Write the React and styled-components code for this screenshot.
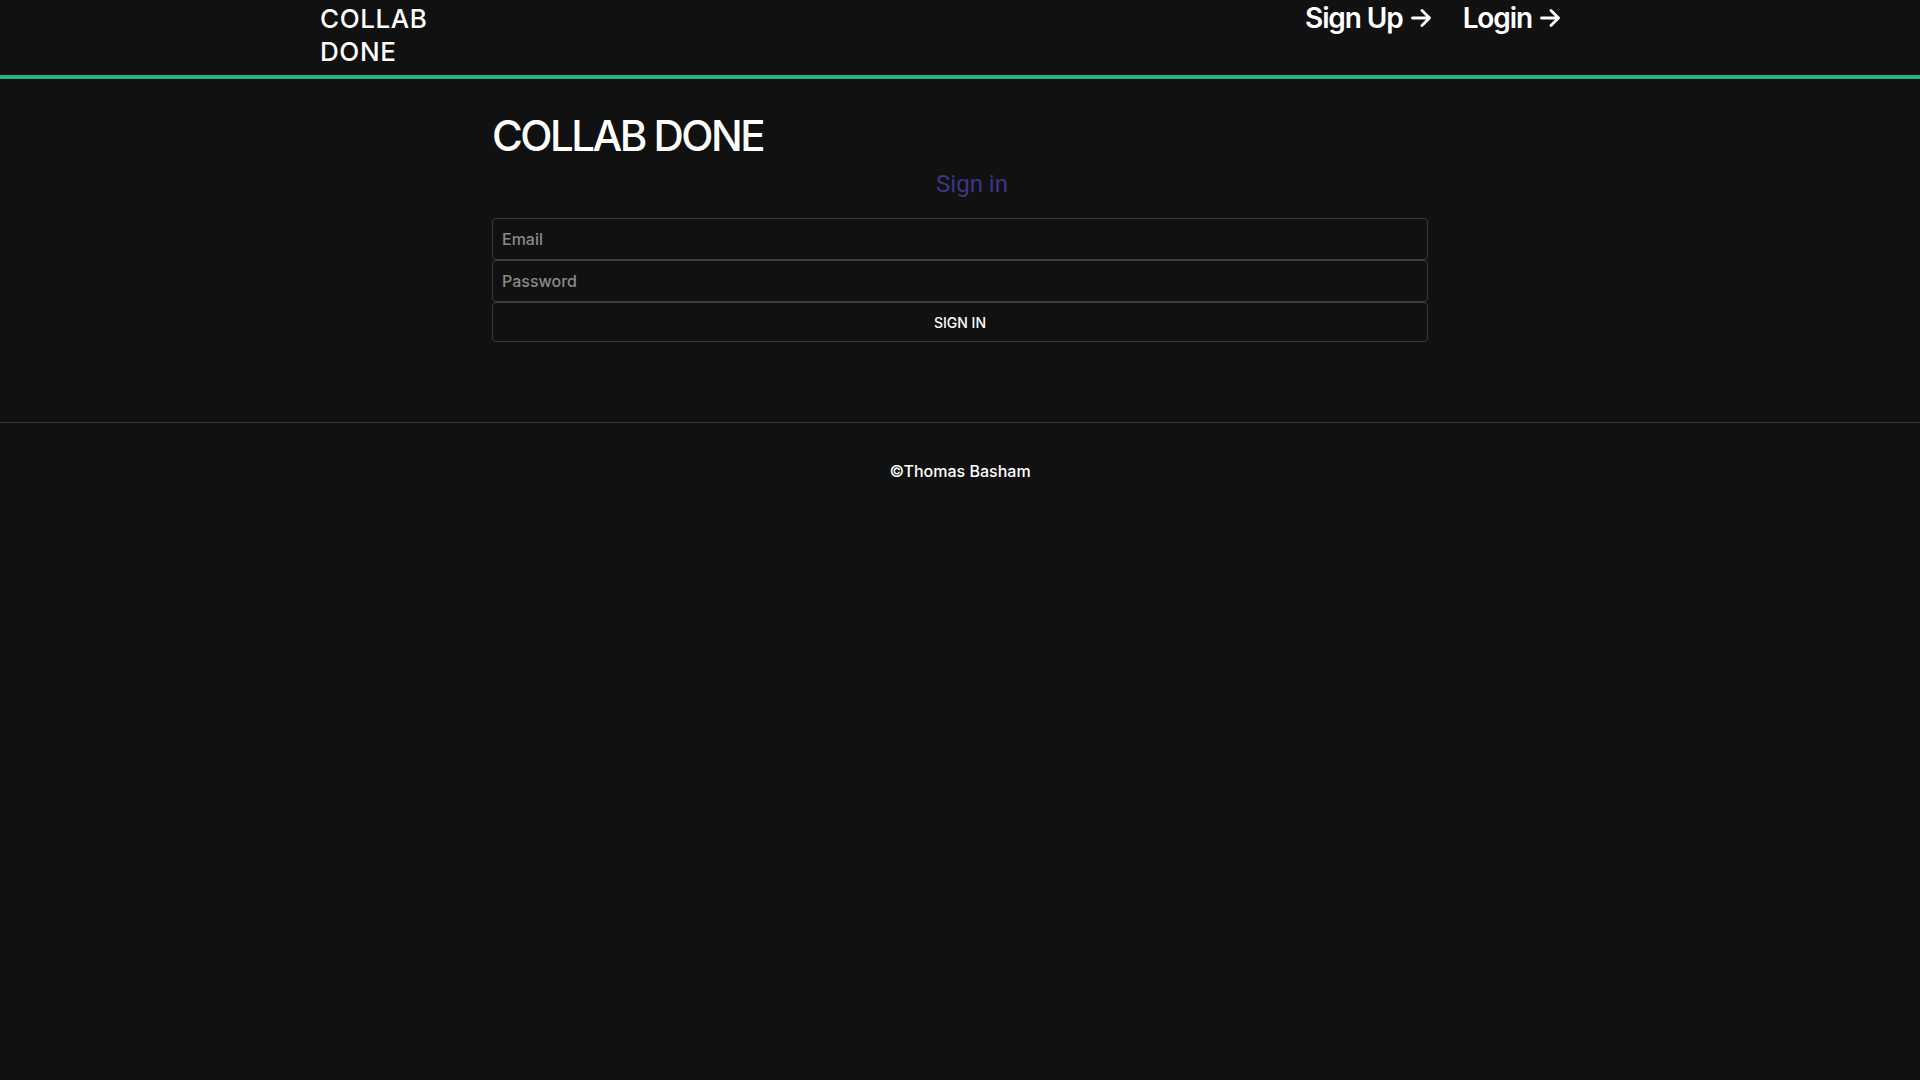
import React from 'react';
import styled, { createGlobalStyle } from 'styled-components';

const GlobalStyle = createGlobalStyle`
  html, body {
    margin: 0;
    padding: 0;
    background: #111111;
    min-height: 100%;
  }
  body {
    font-family: Inter, 'Noto Sans', sans-serif;
    color: #ffffff;
    min-height: 1080px;
  }
  * {
    box-sizing: border-box;
  }
`;

const Header = styled.header`
  height: 79px;
  border-bottom: 4px solid #25b47e;
`;

const HeaderInner = styled.div`
  width: 1280px;
  margin: 0 auto;
  display: flex;
  justify-content: space-between;
  align-items: flex-start;
`;

const Logo = styled.a`
  width: 120px;
  padding-top: 2px;
  font-size: 26px;
  line-height: 33px;
  font-weight: 500;
  letter-spacing: 0.6px;
  color: #ffffff;
  text-decoration: none;
`;

const Nav = styled.nav`
  display: flex;
  gap: 31px;
  padding-right: 39px;
  padding-top: 1px;
`;

const NavLink = styled.a`
  display: flex;
  align-items: center;
  gap: 8px;
  font-size: 28px;
  font-weight: 600;
  letter-spacing: -1.1px;
  color: #ffffff;
  text-decoration: none;
  cursor: pointer;
`;

const Main = styled.main`
  width: 936px;
  margin: 30px auto 0;
  padding-bottom: 80px;
`;

const Title = styled.h1`
  margin: 0;
  font-size: 42px;
  line-height: 53px;
  font-weight: 500;
  letter-spacing: -2.5px;
  color: #ffffff;
`;

const Subtitle = styled.h2`
  margin: 8px 0 20px;
  padding-left: 24px;
  text-align: center;
  font-family: Roboto, sans-serif;
  font-size: 24px;
  font-weight: 400;
  color: #3d3687;
`;

const Form = styled.form`
  display: flex;
  flex-direction: column;
`;

const Input = styled.input`
  height: 42px;
  padding: 0 9px;
  background: #111111;
  border: 1px solid #3a3a3a;
  border-radius: 4px;
  font-family: Inter, sans-serif;
  font-size: 16px;
  font-weight: 500;
  color: #ffffff;
  outline: none;

  &::placeholder {
    color: #8a8a8a;
  }
`;

const SubmitButton = styled.button`
  height: 40px;
  background: #111111;
  border: 1px solid #3a3a3a;
  border-radius: 4px;
  font-family: Inter, sans-serif;
  font-size: 14px;
  font-weight: 500;
  text-transform: uppercase;
  color: #ffffff;
  cursor: pointer;
`;

const Footer = styled.footer`
  border-top: 1px solid #3a3a3a;
  padding-top: 38px;
  text-align: center;
  font-size: 16px;
  font-weight: 500;
  color: #ffffff;
`;

const Arrow = () => (
  <svg width="21" height="18" viewBox="0 0 21 18" fill="none">
    <path
      d="M1.5 9H18.5M11 1.5L18.5 9L11 16.5"
      stroke="#ffffff"
      strokeWidth="2.8"
      strokeLinecap="round"
      strokeLinejoin="round"
    />
  </svg>
);

const App = () => (
  <>
    <GlobalStyle />
    <Header>
      <HeaderInner>
        <Logo href="#">COLLAB DONE</Logo>
        <Nav>
          <NavLink>
            Sign Up <Arrow />
          </NavLink>
          <NavLink>
            Login <Arrow />
          </NavLink>
        </Nav>
      </HeaderInner>
    </Header>
    <Main>
      <Title>COLLAB DONE</Title>
      <Subtitle>Sign in</Subtitle>
      <Form onSubmit={e => e.preventDefault()}>
        <Input type="email" placeholder="Email" />
        <Input type="password" placeholder="Password" />
        <SubmitButton type="submit">Sign in</SubmitButton>
      </Form>
    </Main>
    <Footer>©Thomas Basham</Footer>
  </>
);

export default App;
